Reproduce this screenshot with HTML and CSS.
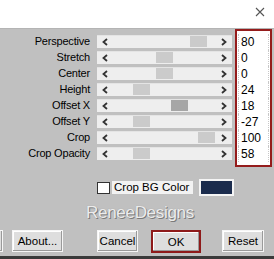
FILE: index.html
```html
<!DOCTYPE html>
<html>
<head>
<meta charset="utf-8">
<link rel="stylesheet" href="styles.css">
</head>
<body>
<div class="window">
  <div class="titlebar">
    <svg class="close" width="10" height="10" viewBox="0 0 10 10"><path d="M1 1L9 9M9 1L1 9" stroke="#555" stroke-width="1.1" fill="none"/></svg>
  </div>
  <div class="panel">
    <div class="top">
      <div class="sliders">
        <div class="label">Perspective</div>
        <div class="track"><span class="arrow left"><svg width="6" height="8" viewBox="0 0 6 8"><path d="M5 1L1.5 4L5 7" stroke="#333" stroke-width="1.8" fill="none"/></svg></span><span class="thumb" style="left:93px"></span><span class="arrow right"><svg width="6" height="8" viewBox="0 0 6 8"><path d="M1 1L4.5 4L1 7" stroke="#333" stroke-width="1.8" fill="none"/></svg></span></div>
        <div class="label">Stretch</div>
        <div class="track"><span class="arrow left"><svg width="6" height="8" viewBox="0 0 6 8"><path d="M5 1L1.5 4L5 7" stroke="#333" stroke-width="1.8" fill="none"/></svg></span><span class="thumb" style="left:59px"></span><span class="arrow right"><svg width="6" height="8" viewBox="0 0 6 8"><path d="M1 1L4.5 4L1 7" stroke="#333" stroke-width="1.8" fill="none"/></svg></span></div>
        <div class="label">Center</div>
        <div class="track"><span class="arrow left"><svg width="6" height="8" viewBox="0 0 6 8"><path d="M5 1L1.5 4L5 7" stroke="#333" stroke-width="1.8" fill="none"/></svg></span><span class="thumb" style="left:59px"></span><span class="arrow right"><svg width="6" height="8" viewBox="0 0 6 8"><path d="M1 1L4.5 4L1 7" stroke="#333" stroke-width="1.8" fill="none"/></svg></span></div>
        <div class="label">Height</div>
        <div class="track"><span class="arrow left"><svg width="6" height="8" viewBox="0 0 6 8"><path d="M5 1L1.5 4L5 7" stroke="#333" stroke-width="1.8" fill="none"/></svg></span><span class="thumb" style="left:36px"></span><span class="arrow right"><svg width="6" height="8" viewBox="0 0 6 8"><path d="M1 1L4.5 4L1 7" stroke="#333" stroke-width="1.8" fill="none"/></svg></span></div>
        <div class="label">Offset X</div>
        <div class="track"><span class="arrow left"><svg width="6" height="8" viewBox="0 0 6 8"><path d="M5 1L1.5 4L5 7" stroke="#333" stroke-width="1.8" fill="none"/></svg></span><span class="thumb active" style="left:74px"></span><span class="arrow right"><svg width="6" height="8" viewBox="0 0 6 8"><path d="M1 1L4.5 4L1 7" stroke="#333" stroke-width="1.8" fill="none"/></svg></span></div>
        <div class="label">Offset Y</div>
        <div class="track"><span class="arrow left"><svg width="6" height="8" viewBox="0 0 6 8"><path d="M5 1L1.5 4L5 7" stroke="#333" stroke-width="1.8" fill="none"/></svg></span><span class="thumb" style="left:36px"></span><span class="arrow right"><svg width="6" height="8" viewBox="0 0 6 8"><path d="M1 1L4.5 4L1 7" stroke="#333" stroke-width="1.8" fill="none"/></svg></span></div>
        <div class="label">Crop</div>
        <div class="track"><span class="arrow left"><svg width="6" height="8" viewBox="0 0 6 8"><path d="M5 1L1.5 4L5 7" stroke="#333" stroke-width="1.8" fill="none"/></svg></span><span class="thumb" style="left:101px"></span><span class="arrow right"><svg width="6" height="8" viewBox="0 0 6 8"><path d="M1 1L4.5 4L1 7" stroke="#333" stroke-width="1.8" fill="none"/></svg></span></div>
        <div class="label">Crop Opacity</div>
        <div class="track"><span class="arrow left"><svg width="6" height="8" viewBox="0 0 6 8"><path d="M5 1L1.5 4L5 7" stroke="#333" stroke-width="1.8" fill="none"/></svg></span><span class="thumb" style="left:36px"></span><span class="arrow right"><svg width="6" height="8" viewBox="0 0 6 8"><path d="M1 1L4.5 4L1 7" stroke="#333" stroke-width="1.8" fill="none"/></svg></span></div>
      </div>
      <div class="values">
        <div class="val">80</div>
        <div class="val">0</div>
        <div class="val">0</div>
        <div class="val">24</div>
        <div class="val">18</div>
        <div class="val">-27</div>
        <div class="val">100</div>
        <div class="val">58</div>
      </div>
    </div>
    <div class="colorrow">
      <span class="check"></span>
      <span class="checklabel">Crop BG Color</span>
      <span class="swatch"></span>
    </div>
    <div class="watermark">ReneeDesigns</div>
    <div class="buttons">
      <div class="btn stub"></div>
      <div class="btn about">About...</div>
      <div class="btn cancel">Cancel</div>
      <div class="okwrap"><div class="btn ok">OK</div></div>
      <div class="btn reset">Reset</div>
    </div>
  </div>
  <div class="taskbar"></div>
</div>
</body>
</html>
```

FILE: styles.css
```css
* { box-sizing: border-box; }
html, body { margin: 0; padding: 0; background: #ffffff; }
body { font-family: "Liberation Sans", Arial, sans-serif; font-size: 11px; color: #000; }
.window { width: 274px; height: 259px; display: flex; flex-direction: column; overflow: hidden; }
.titlebar { height: 28px; background: #fff; display: flex; justify-content: flex-end; align-items: flex-start; padding: 7px 9px 0 0; }
.close { display: block; }
.panel { height: 228px; background: #c0c0c0; border-top: 1px solid #b4b4b4; display: flex; flex-direction: column; }
.top { display: flex; }
.sliders { margin-top: 6px; display: grid; grid-template-columns: 90px 135px; grid-auto-rows: 13px; column-gap: 7px; row-gap: 3px; }
.label { text-align: right; line-height: 13px; white-space: nowrap; letter-spacing: -0.2px; }
.track { position: relative; background: #eeeeee; border-top: 1px solid #e4e4e4; }
.arrow { position: absolute; top: 2px; display: block; }
.arrow svg { display: block; }
.arrow.left { left: 5px; }
.arrow.right { left: 124px; }
.thumb { position: absolute; top: 0px; width: 17px; height: 11px; background: #cbcbcb; }
.thumb.active { background: #a6a6a6; }
.values { margin-left: 3px; width: 37px; height: 138px; border: 2px solid #951c1c; background: #fff; padding: 3px 1px 0 1px; }
.val { height: 16px; line-height: 16px; font-size: 12px; padding-left: 2px; border-left: 1px dotted #c8c8c8; border-right: 1px dotted #c8c8c8; }
.colorrow { display: flex; align-items: center; margin: 12px 0 0 97px; height: 17px; }
.check { width: 13px; height: 12px; background: #fff; border: 1px solid #333; }
.checklabel { margin-left: 2px; background: #f2f2f2; height: 13px; line-height: 13px; padding: 0 4px 0 2px; font-size: 11.5px; }
.swatch { margin-left: 6px; width: 35px; height: 17px; background: #1b2c4d; border: 2px solid #f4f4f4; }
.watermark { margin-top: 7px; height: 20px; text-align: center; padding-left: 6px; font-size: 17px; line-height: 20px; color: #ececec; letter-spacing: -0.3px; text-shadow: 1px 1px 0 #7a7a7a, 0 0 1px #9a9a9a; }
.buttons { display: flex; margin-top: 7px; height: 22px; }
.btn { height: 22px; background: #dedede; border: 1px solid #f6f6f6; box-shadow: inset -1px -1px 0 #9a9a9a, inset 1px 1px 0 #ffffff; display: flex; align-items: center; justify-content: center; font-size: 11.5px; }
.stub { width: 3px; border-left: none; box-shadow: inset -1px -1px 0 #9a9a9a; }
.about { margin-left: 9px; width: 51px; }
.cancel { margin-left: 34px; width: 41px; }
.okwrap { margin-left: 13px; width: 50px; height: 23px; border: 2px solid #8e1a1a; }
.ok { width: 46px; height: 19px; border: none; }
.reset { margin-left: 21px; width: 42px; }
.taskbar { height: 3px; background: #3a3a3a; }
```
